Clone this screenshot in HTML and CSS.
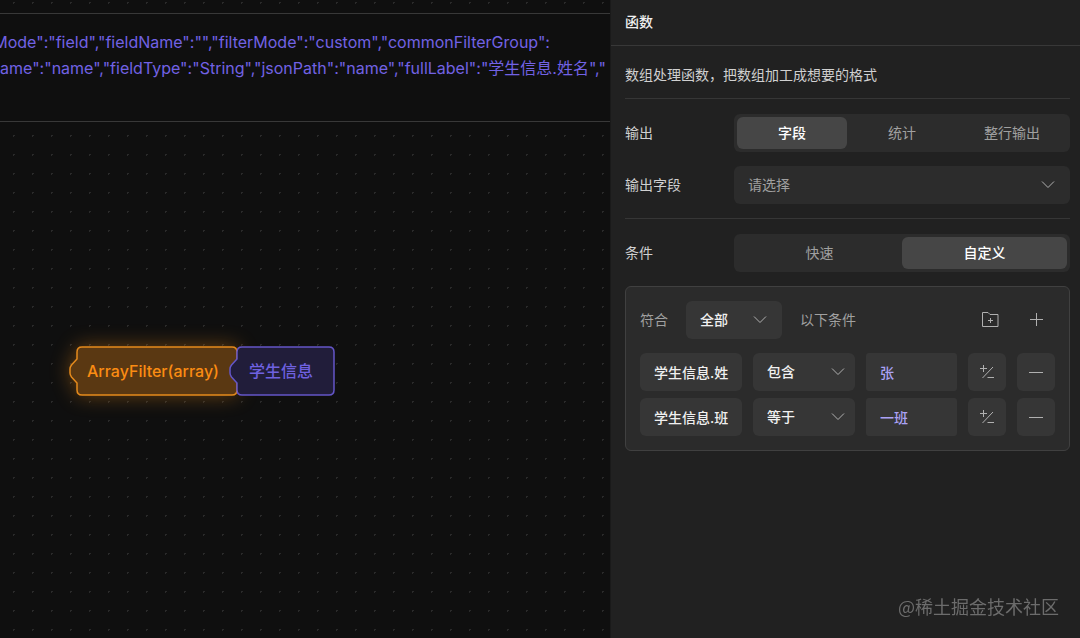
FILE: index.html
```html
<!DOCTYPE html>
<html lang="zh-CN">
  <head>
    <meta charset="UTF-8" />
    <meta name="viewport" content="width=device-width, initial-scale=1.0" />
    <title>函数</title>
    <link rel="stylesheet" href="styles.css">
  </head>
  <body>
    <!-- 图标 -->
    <svg class="icon-defs" aria-hidden="true">
      <symbol id="icon-arrow" viewBox="0 0 14 14">
        <path d="M1 3.5 L7 9.5 L13 3.5" />
      </symbol>
      <symbol id="icon-folder" viewBox="0 0 18 16">
        <path d="M1.5 0.5 H7 L9 2.5 H17 V14.5 H1.5 Z M9.5 6 V11 M7 8.5 H12" />
      </symbol>
      <symbol id="icon-plus" viewBox="0 0 14 14">
        <path d="M7.5 0 V13 M1 6.5 H14" />
      </symbol>
      <symbol id="icon-minus" viewBox="0 0 14 14">
        <path d="M0 7.5 H14" />
      </symbol>
      <symbol id="icon-plus-minus" viewBox="0 0 14 14">
        <path d="M3.5 0 V7 M0 3.5 H7 M13 2 L2.5 13 M7.5 12.5 H14" />
      </symbol>
    </svg>

    <div class="app">
      <main class="canvas">
        <div class="expression">
          <div class="expression-line">tMode":"field","fieldName":"","filterMode":"custom","commonFilterGroup":</div>
          <div class="expression-line">Name":"name","fieldType":"String","jsonPath":"name","fullLabel":"学生信息.姓名","</div>
        </div>

        <!-- 节点 -->
        <div class="node node-function">
          <svg class="node-shape" width="170" height="50" viewBox="0 0 170 50" aria-hidden="true">
            <path d="M13 1 H163 Q168 1 168 6 V44 Q168 49 163 49 H13 Q8 49 8 44 V37 L2.5 31 Q1 29 1 27 V23 Q1 21 2.5 19 L8 13 V6 Q8 1 13 1 Z" />
          </svg>
          <span class="node-label">ArrayFilter(array)</span>
        </div>
        <div class="node node-variable">
          <svg class="node-shape" width="108" height="50" viewBox="0 0 108 50" aria-hidden="true">
            <path d="M13 1 H100 Q105 1 105 6 V44 Q105 49 100 49 H13 Q8 49 8 44 V37 L2.5 31 Q1 29 1 27 V23 Q1 21 2.5 19 L8 13 V6 Q8 1 13 1 Z" />
          </svg>
          <span class="node-label">学生信息</span>
        </div>
      </main>

      <aside class="panel">
        <h2 class="panel-title">函数</h2>
        <div class="panel-body">
          <p class="description">数组处理函数，把数组加工成想要的格式</p>

          <section class="section">
            <div class="form-row">
              <span class="form-label" id="outputLabel">输出</span>
              <div class="segmented" role="group" aria-labelledby="outputLabel">
                <button class="segment active" type="button">字段</button>
                <button class="segment" type="button">统计</button>
                <button class="segment" type="button">整行输出</button>
              </div>
            </div>
            <div class="form-row">
              <label class="form-label" for="outputField">输出字段</label>
              <div class="select placeholder">
                <select id="outputField">
                  <option>请选择</option>
                </select>
                <svg class="icon"><use href="#icon-arrow" /></svg>
              </div>
            </div>
          </section>

          <section class="section">
            <div class="form-row">
              <span class="form-label" id="conditionLabel">条件</span>
              <div class="segmented" role="group" aria-labelledby="conditionLabel">
                <button class="segment" type="button">快速</button>
                <button class="segment active" type="button">自定义</button>
              </div>
            </div>

            <div class="filter-group">
              <div class="filter-header">
                <label for="matchMode">符合</label>
                <div class="select match-select">
                  <select id="matchMode">
                    <option>全部</option>
                  </select>
                  <svg class="icon"><use href="#icon-arrow" /></svg>
                </div>
                <span>以下条件</span>
                <div class="filter-actions">
                  <button class="icon-btn plain" type="button" aria-label="添加条件组">
                    <svg class="icon folder"><use href="#icon-folder" /></svg>
                  </button>
                  <button class="icon-btn plain" type="button" aria-label="添加条件">
                    <svg class="icon"><use href="#icon-plus" /></svg>
                  </button>
                </div>
              </div>

              <div class="filter-row">
                <input class="field-input" type="text" value="学生信息.姓" aria-label="字段" />
                <div class="select">
                  <select aria-label="运算符">
                    <option>包含</option>
                  </select>
                  <svg class="icon"><use href="#icon-arrow" /></svg>
                </div>
                <input class="field-input value" type="text" value="张" aria-label="值" />
                <button class="icon-btn" type="button" aria-label="切换">
                  <svg class="icon"><use href="#icon-plus-minus" /></svg>
                </button>
                <button class="icon-btn" type="button" aria-label="删除">
                  <svg class="icon"><use href="#icon-minus" /></svg>
                </button>
              </div>

              <div class="filter-row">
                <input class="field-input" type="text" value="学生信息.班" aria-label="字段" />
                <div class="select">
                  <select aria-label="运算符">
                    <option>等于</option>
                  </select>
                  <svg class="icon"><use href="#icon-arrow" /></svg>
                </div>
                <input class="field-input value" type="text" value="一班" aria-label="值" />
                <button class="icon-btn" type="button" aria-label="切换">
                  <svg class="icon"><use href="#icon-plus-minus" /></svg>
                </button>
                <button class="icon-btn" type="button" aria-label="删除">
                  <svg class="icon"><use href="#icon-minus" /></svg>
                </button>
              </div>
            </div>
          </section>
        </div>
      </aside>
    </div>

    <div class="watermark">@稀土掘金技术社区</div>
  </body>
</html>
```
FILE: styles.css
```css
* {
  box-sizing: border-box;
}

body {
  margin: 0;
  background-color: #0f0f0f;
  color: #d0d0d0;
  font-family: Inter, "Noto Sans CJK SC", sans-serif;
  font-size: 14px;
  line-height: 20px;
}

button,
input,
select {
  border: none;
  margin: 0;
  font: inherit;
  color: inherit;
  background: none;
}

.icon-defs {
  display: none;
}

.icon {
  width: 14px;
  height: 14px;
  fill: none;
  stroke: #b0b0b0;
  stroke-width: 1;
}

.icon.folder {
  width: 18px;
  height: 16px;
}

.app {
  display: flex;
  min-height: 100vh;
}

/* 画布 */
.canvas {
  position: relative;
  flex: 1;
  min-width: 0;
  overflow: hidden;
  padding-top: 13px;
  background-image: radial-gradient(circle at 50% 50%, #2a2a2a 1px, transparent 1px);
  background-size: 19px 19px;
  background-position: 4px -7px;
}

.expression {
  height: 109px;
  padding: 15px 0;
  border-top: 1px solid #383838;
  border-bottom: 1px solid #383838;
  background-color: #0f0f0f;
  color: #7262e4;
  font-size: 16px;
  line-height: 26px;
  white-space: nowrap;
}

.expression-line {
  margin-left: -12px;
}

.node {
  position: absolute;
  top: 346px;
  height: 50px;
  display: flex;
  align-items: center;
  font-size: 16px;
  font-weight: 500;
}

.node-function {
  left: 69px;
  width: 170px;
  padding-left: 18px;
  color: #fb8c12;
}

.node-variable {
  left: 229px;
  width: 108px;
  padding-left: 20px;
  color: #6f61e0;
}

.node-shape {
  position: absolute;
  top: 0;
  left: 0;
  overflow: visible;
  stroke-width: 1.5;
}

.node-function .node-shape {
  fill: #5a3812;
  stroke: #e58a1c;
  filter: drop-shadow(0 0 10px rgba(240, 140, 20, 0.4));
}

.node-variable .node-shape {
  fill: #211d3a;
  stroke: #6456c8;
}

.node-label {
  position: relative;
}

/* 右侧面板 */
.panel {
  width: 470px;
  border-left: 1px solid #1a1a1a;
  background-color: #212121;
}

.panel-title {
  margin: 0;
  padding: 12px 14px 13px;
  border-bottom: 1px solid #383838;
  color: #f0f0f0;
  font-size: 14px;
  font-weight: 500;
}

.panel-body {
  padding: 0 10px 0 14px;
}

.description {
  margin: 0;
  padding: 19px 0 13px;
}

.section {
  display: flex;
  flex-direction: column;
  gap: 14px;
  padding: 15px 0 14px;
  border-top: 1px solid #363636;
}

.form-row {
  display: flex;
  align-items: center;
}

.form-label {
  width: 109px;
}

.segmented {
  flex: 1;
  display: flex;
  height: 38px;
  padding: 3px;
  border-radius: 6px;
  background-color: #2c2c2c;
}

.segment {
  flex: 1;
  padding: 0;
  border-radius: 6px;
  color: #a0a0a0;
  cursor: pointer;
}

.segment.active {
  background-color: #464646;
  color: #ffffff;
  font-weight: 500;
}

/* 箭头叠在下拉框上 */
.select {
  flex: 1;
  display: grid;
  align-items: center;
  height: 38px;
  border-radius: 6px;
  background-color: #2c2c2c;
}

.select select {
  grid-area: 1 / 1;
  width: 100%;
  height: 38px;
  padding: 0 14px;
  appearance: none;
  outline: none;
}

.select .icon {
  grid-area: 1 / 1;
  justify-self: end;
  margin-right: 15px;
  pointer-events: none;
}

.select.placeholder {
  color: #a0a0a0;
}

/* 条件组 */
.filter-group {
  display: flex;
  flex-direction: column;
  gap: 7px;
  padding: 14px;
  border: 1px solid #404040;
  border-radius: 6px;
  background-color: #2b2b2b;
}

.filter-header {
  display: flex;
  align-items: center;
  gap: 18px;
  margin-bottom: 7px;
  color: #a0a0a0;
}

.filter-group .select {
  background-color: #363636;
  color: #f0f0f0;
  font-weight: 500;
}

.filter-group .select .icon {
  margin-right: 10px;
}

.filter-group .match-select {
  flex: none;
  width: 96px;
}

.filter-group .match-select .icon {
  margin-right: 15px;
}

.filter-actions {
  display: flex;
  gap: 8px;
  margin-left: auto;
}

.filter-row {
  display: grid;
  grid-template-columns: 1fr 1fr 91px 38px 38px;
  gap: 11px;
}

.field-input {
  width: 100%;
  min-width: 0;
  height: 38px;
  padding: 0 0 0 14px;
  border-radius: 6px;
  background-color: #363636;
  color: #f0f0f0;
  font-weight: 500;
}

.field-input.value {
  border-radius: 3px;
  color: #aba2f5;
}

.icon-btn {
  display: flex;
  align-items: center;
  justify-content: center;
  width: 38px;
  height: 38px;
  padding: 0;
  border-radius: 6px;
  background-color: #363636;
  cursor: pointer;
}

.icon-btn.plain {
  background: none;
}

.watermark {
  position: fixed;
  right: 21px;
  bottom: 20px;
  color: #6c6c6c;
  font-family: "Noto Sans CJK SC", sans-serif;
  font-size: 18px;
  line-height: 24px;
}
```
